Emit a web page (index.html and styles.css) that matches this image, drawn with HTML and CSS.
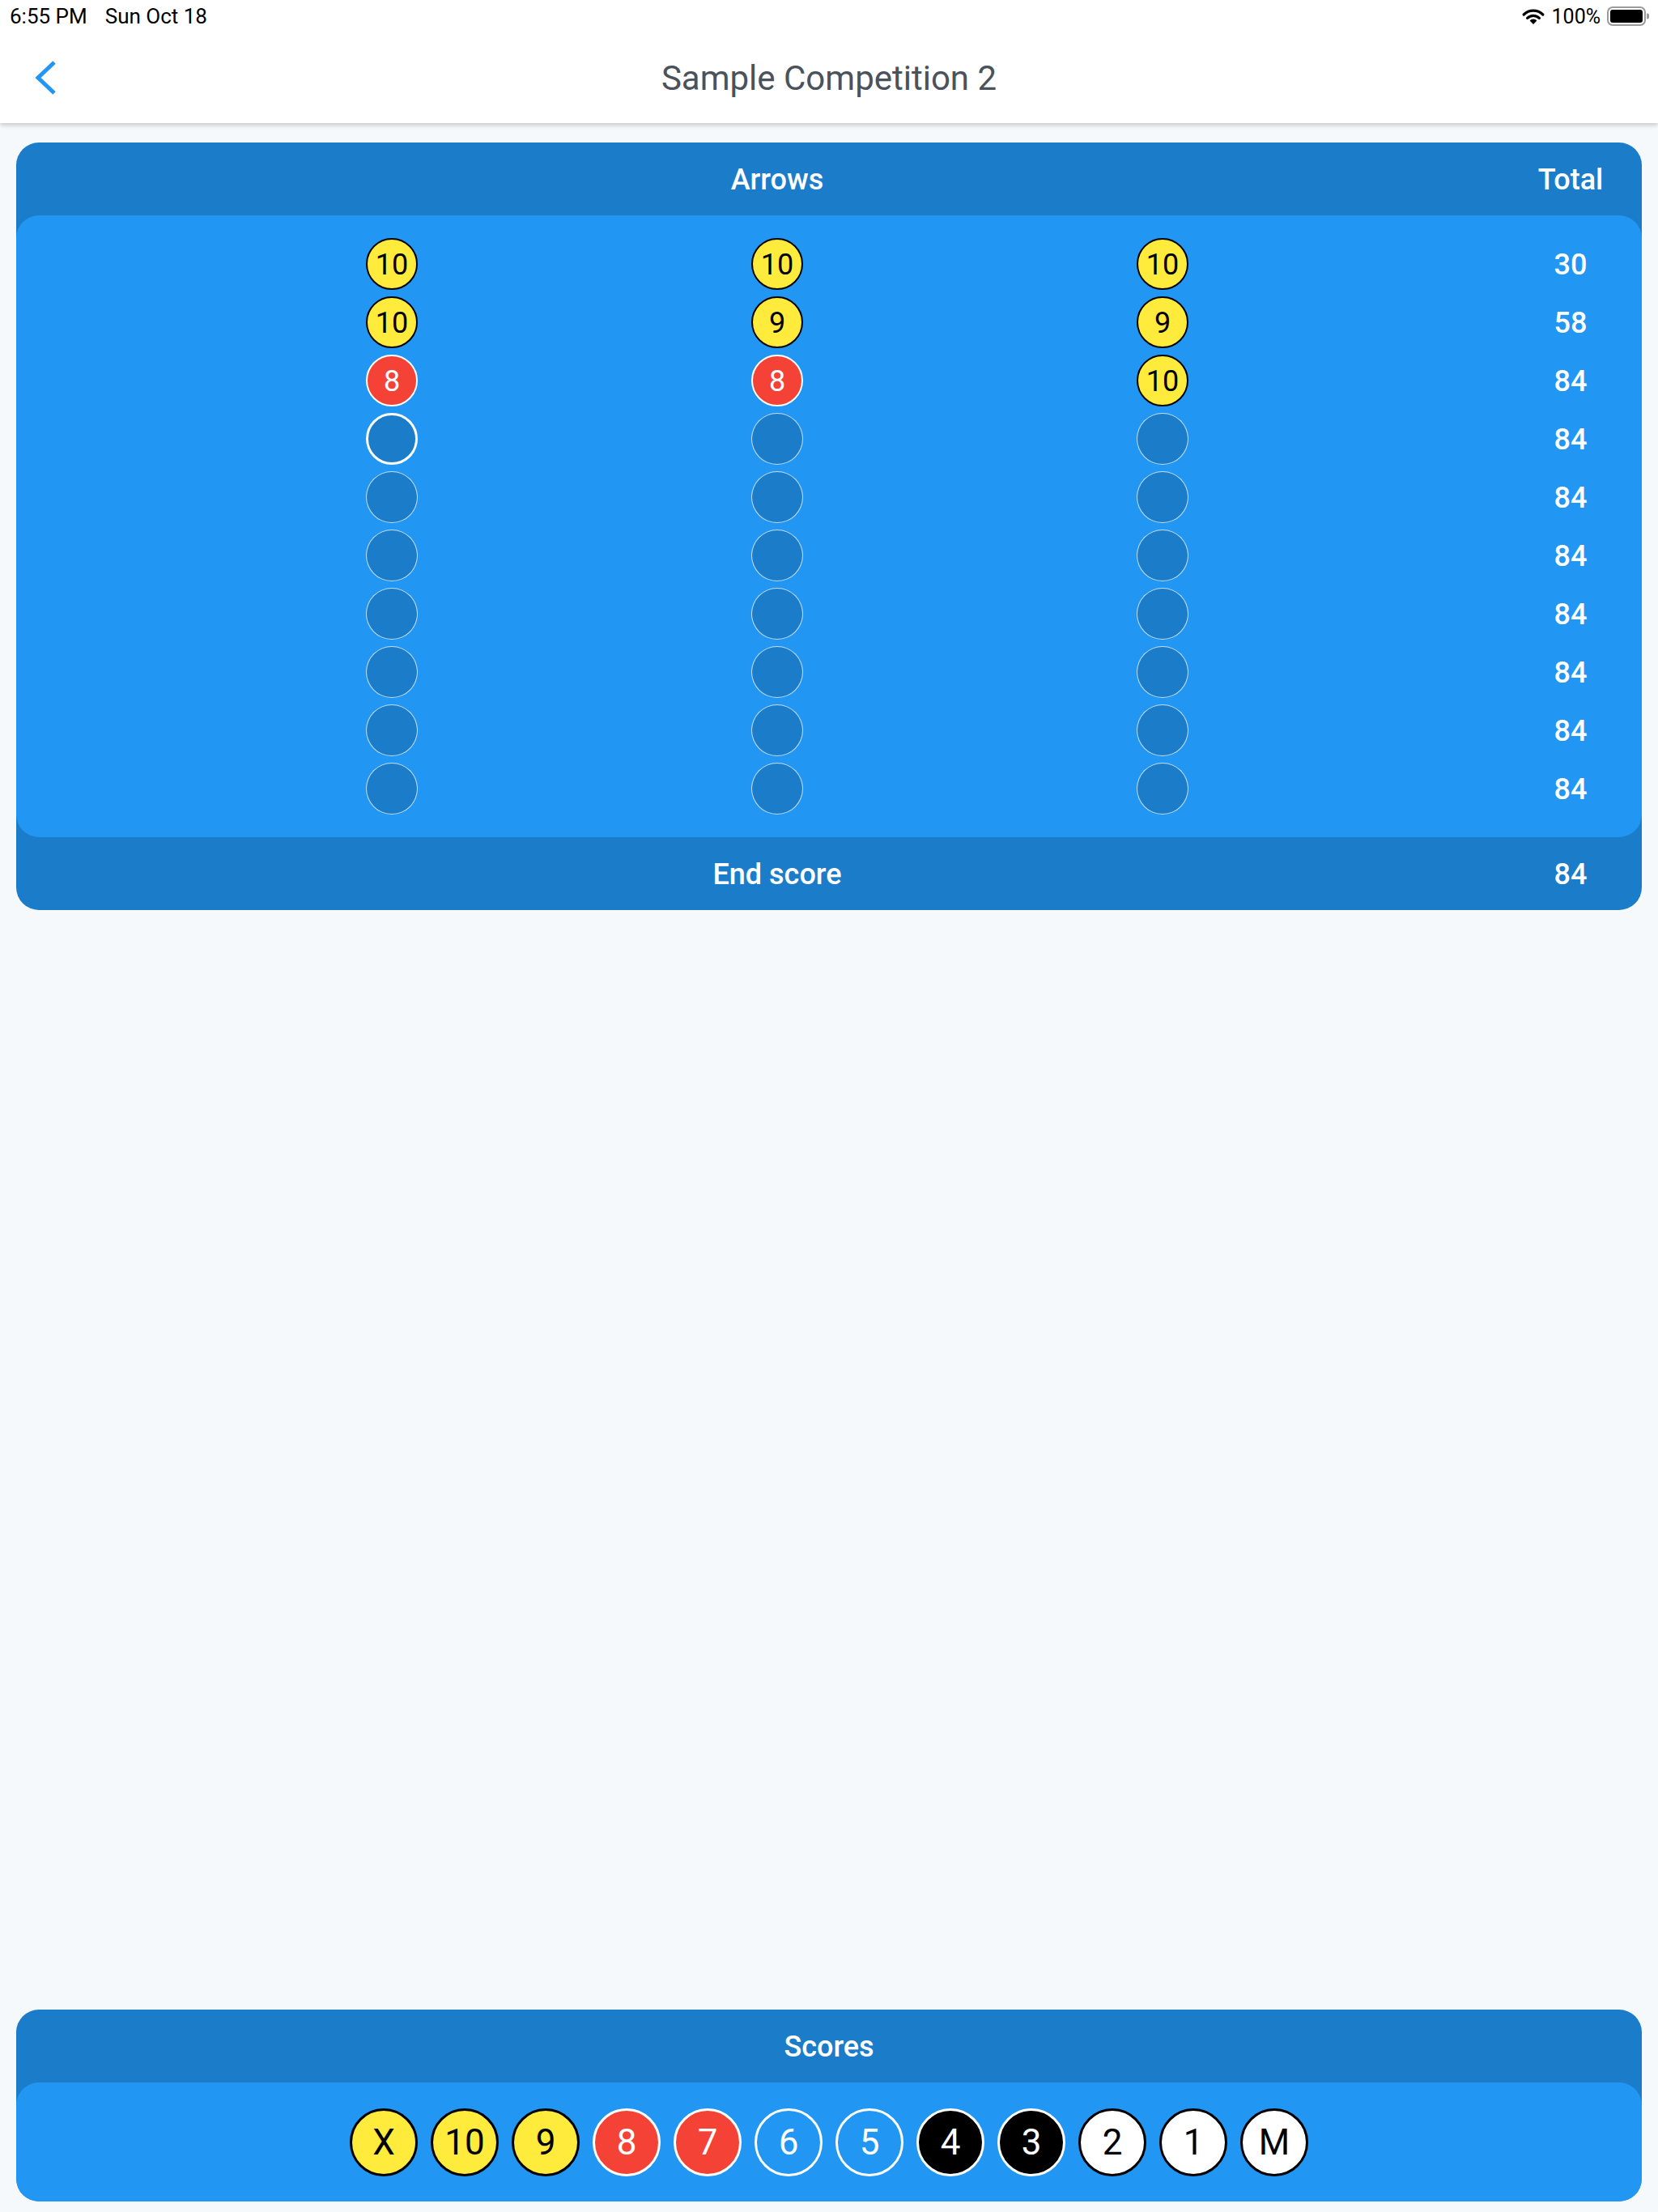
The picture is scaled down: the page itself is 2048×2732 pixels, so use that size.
FILE: index.html
```html
<!DOCTYPE html>
<html lang="en">
<head>
<meta charset="utf-8">
<title>Sample Competition 2</title>
<link rel="stylesheet" href="styles.css">
</head>
<body>
<div class="screen">
  <header class="topbar">
    <div class="status">
      <div class="status-left"><span>6:55 PM</span><span>Sun Oct 18</span></div>
      <div class="status-right">
        <svg class="wifi" width="28" height="21" viewBox="0 0 28 21">
          <path d="M14 20 L9.6 15.4 A6.3 6.3 0 0 1 18.4 15.4 Z" fill="#000"/>
          <path d="M6.6 12.4 A10.5 10.5 0 0 1 21.4 12.4" fill="none" stroke="#000" stroke-width="3.2" stroke-linecap="round"/>
          <path d="M2.2 8 A16.7 16.7 0 0 1 25.8 8" fill="none" stroke="#000" stroke-width="3.2" stroke-linecap="round"/>
        </svg>
        <span class="pct">100%</span>
        <svg class="battery" width="52" height="24" viewBox="0 0 52 24">
          <rect x="1" y="1" width="46" height="22" rx="6" fill="none" stroke="#9a9a9a" stroke-width="2"/>
          <rect x="4" y="4" width="40" height="16" rx="3" fill="#000"/>
          <path d="M49 8.5 a3 3 0 0 1 0 7 z" fill="#9a9a9a"/>
        </svg>
      </div>
    </div>
    <nav class="nav">
      <div class="nav-left">
        <svg class="back" width="32" height="44" viewBox="0 0 32 44">
          <path d="M27 3 L7 22 L27 41" fill="none" stroke="#2196F3" stroke-width="5"/>
        </svg>
      </div>
      <h1 class="title">Sample Competition 2</h1>
      <div class="nav-right"></div>
    </nav>
  </header>

  <main class="content">
    <section class="card">
      <div class="grid-row band">
        <div class="span-arrows">Arrows</div>
        <div class="total">Total</div>
      </div>
      <div class="card-body">
        <div class="grid-row line"><span class="arrow yellow c1">10</span><span class="arrow yellow">10</span><span class="arrow yellow">10</span><span class="total">30</span></div>
        <div class="grid-row line"><span class="arrow yellow c1">10</span><span class="arrow yellow">9</span><span class="arrow yellow">9</span><span class="total">58</span></div>
        <div class="grid-row line"><span class="arrow red c1">8</span><span class="arrow red">8</span><span class="arrow yellow">10</span><span class="total">84</span></div>
        <div class="grid-row line"><span class="arrow empty selected c1"></span><span class="arrow empty"></span><span class="arrow empty"></span><span class="total">84</span></div>
        <div class="grid-row line"><span class="arrow empty c1"></span><span class="arrow empty"></span><span class="arrow empty"></span><span class="total">84</span></div>
        <div class="grid-row line"><span class="arrow empty c1"></span><span class="arrow empty"></span><span class="arrow empty"></span><span class="total">84</span></div>
        <div class="grid-row line"><span class="arrow empty c1"></span><span class="arrow empty"></span><span class="arrow empty"></span><span class="total">84</span></div>
        <div class="grid-row line"><span class="arrow empty c1"></span><span class="arrow empty"></span><span class="arrow empty"></span><span class="total">84</span></div>
        <div class="grid-row line"><span class="arrow empty c1"></span><span class="arrow empty"></span><span class="arrow empty"></span><span class="total">84</span></div>
        <div class="grid-row line"><span class="arrow empty c1"></span><span class="arrow empty"></span><span class="arrow empty"></span><span class="total">84</span></div>
      </div>
      <div class="grid-row band">
        <div class="span-arrows">End score</div>
        <div class="total">84</div>
      </div>
    </section>
  </main>

  <section class="card scores">
    <div class="band center">Scores</div>
    <div class="card-body picker">
      <span class="pick p-yellow">X</span>
      <span class="pick p-yellow">10</span>
      <span class="pick p-yellow">9</span>
      <span class="pick p-red">8</span>
      <span class="pick p-red">7</span>
      <span class="pick p-blue">6</span>
      <span class="pick p-blue">5</span>
      <span class="pick p-black">4</span>
      <span class="pick p-black">3</span>
      <span class="pick p-white">2</span>
      <span class="pick p-white">1</span>
      <span class="pick p-white">M</span>
    </div>
  </section>
</div>
</body>
</html>
```

FILE: styles.css
```css
* { box-sizing: border-box; }

html, body {
  margin: 0;
  padding: 0;
}

body {
  background: #F5F9FC;
  font-family: Roboto, "Liberation Sans", sans-serif;
  color: #000;
}

.screen {
  width: 2048px;
  min-height: 2732px;
  display: flex;
  flex-direction: column;
}

/* ---------- top bar ---------- */
.topbar {
  background: #fff;
  box-shadow: 0 2px 6px rgba(0, 0, 0, 0.22);
  position: relative;
  z-index: 1;
}

.status {
  height: 40px;
  display: flex;
  align-items: center;
  justify-content: space-between;
  padding: 0 11px 0 12px;
  font-size: 26px;
  color: #000;
}

.status-left {
  display: flex;
  gap: 22px;
}

.status-right {
  display: flex;
  align-items: center;
  gap: 8px;
}

.pct { font-size: 25px; }

.wifi { margin-right: 1px; }
.battery { display: block; }

.nav {
  height: 112px;
  display: grid;
  grid-template-columns: 1fr auto 1fr;
  align-items: center;
}

.nav-left {
  padding-left: 40px;
  display: flex;
  align-items: center;
}

.back { display: block; }

.title {
  margin: 0;
  font-size: 42px;
  font-weight: 400;
  color: #4A525B;
  letter-spacing: 0;
}

/* ---------- content ---------- */
.content {
  flex: 1;
  padding-top: 24px;
}

.card {
  margin: 0 20px;
  background: #1B7CC9;
  border-radius: 28px;
  overflow: hidden;
  color: #fff;
}

.card-body {
  background: #2196F3;
  border-radius: 28px;
}

.grid-row {
  display: grid;
  grid-template-columns: 226px 476px 476px 476px 1fr 176px;
  align-items: center;
}

.band {
  height: 90px;
  font-size: 36px;
  font-weight: 500;
  padding-top: 2px;
}

.span-arrows {
  grid-column: 2 / 5;
  text-align: center;
}

.total {
  grid-column: 6;
  text-align: center;
  font-size: 36px;
  font-weight: 500;
  color: #fff;
}

.line .total {
  padding-top: 2px;
}

.card > .card-body {
  padding: 24px 0;
}

.line {
  height: 72px;
}

.arrow {
  width: 64px;
  height: 64px;
  border-radius: 50%;
  justify-self: center;
  display: flex;
  align-items: center;
  justify-content: center;
  font-size: 36px;
  font-weight: 400;
  line-height: 1;
  padding-top: 1px;
}

.arrow.c1 { grid-column: 2; }

.yellow {
  background: #FFEB3B;
  border: 2px solid #000;
  color: #000;
}

.red {
  background: #F44336;
  border: 2px solid #fff;
  color: #fff;
}

.empty {
  background: #1B7CC9;
  border: 1.5px solid rgba(255, 255, 255, 0.75);
}

.empty.selected {
  border: 3.5px solid #fff;
}

/* ---------- scores picker ---------- */
.scores {
  margin-bottom: 13px;
}

.band.center {
  display: flex;
  align-items: center;
  justify-content: center;
}

.scores > .picker {
  display: flex;
  justify-content: center;
  gap: 16px;
  padding: 32px 0 31px;
}

.pick {
  width: 84px;
  height: 84px;
  border-radius: 50%;
  display: flex;
  align-items: center;
  justify-content: center;
  font-size: 44px;
  font-weight: 400;
  line-height: 1;
  border: 3px solid #000;
}

.p-yellow { background: #FFEB3B; border-color: #000; color: #000; }
.p-red { background: #F44336; border-color: #fff; color: #fff; }
.p-blue { background: transparent; border-color: #fff; color: #fff; }
.p-black { background: #000; border-color: #fff; color: #fff; }
.p-white { background: #fff; border-color: #000; color: #000; }
```
